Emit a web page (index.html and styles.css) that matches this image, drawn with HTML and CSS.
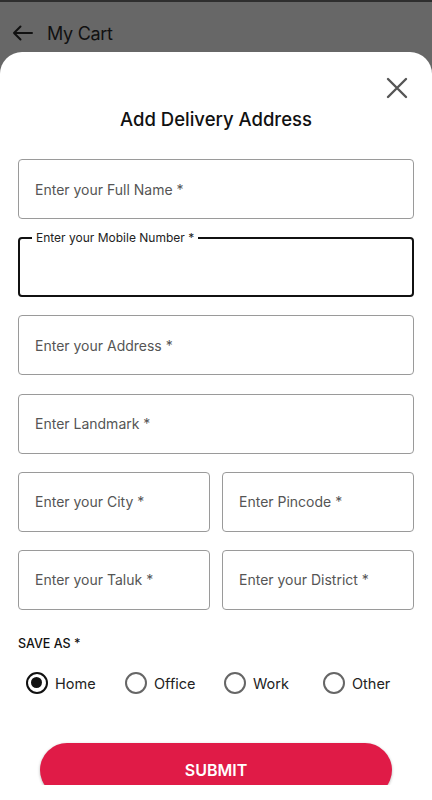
FILE: index.html
```html
<!DOCTYPE html>
<html lang="en">
<head>
    <meta charset="UTF-8">
    <meta name="viewport" content="width=device-width, initial-scale=1.0">
    <title>My Cart - Add Delivery Address</title>
    <link rel="stylesheet" href="styles.css">
</head>
<body>
    <!-- Page behind the sheet -->
    <header class="topbar">
        <svg class="back-icon" width="22" height="16" viewBox="0 0 22 16">
            <path d="M20 8H2M8.5 1.5L2 8l6.5 6.5" fill="none" stroke="#111" stroke-width="2" stroke-linecap="round" stroke-linejoin="round"/>
        </svg>
        <span class="topbar-title">My Cart</span>
    </header>

    <!-- Bottom sheet -->
    <div class="sheet">
        <div class="sheet-scroll">
            <div class="sheet-head">
                <svg class="close-icon" width="22" height="22" viewBox="0 0 22 22">
                    <path d="M2 2L20 20M20 2L2 20" fill="none" stroke="#555" stroke-width="2.4" stroke-linecap="round"/>
                </svg>
            </div>
            <h1 class="sheet-title">Add Delivery Address</h1>

            <form class="address-form">
                <div class="field">
                    <span class="placeholder">Enter your Full Name *</span>
                </div>
                <div class="field focused">
                    <span class="float-label">Enter your Mobile Number *</span>
                </div>
                <div class="field">
                    <span class="placeholder">Enter your Address *</span>
                </div>
                <div class="field">
                    <span class="placeholder">Enter Landmark *</span>
                </div>
                <div class="field-row">
                    <div class="field">
                        <span class="placeholder">Enter your City *</span>
                    </div>
                    <div class="field">
                        <span class="placeholder">Enter Pincode *</span>
                    </div>
                </div>
                <div class="field-row">
                    <div class="field">
                        <span class="placeholder">Enter your Taluk *</span>
                    </div>
                    <div class="field">
                        <span class="placeholder">Enter your District *</span>
                    </div>
                </div>

                <div class="save-as">SAVE AS *</div>
                <div class="radio-group">
                    <label class="radio-item"><span class="radio checked"></span>Home</label>
                    <label class="radio-item"><span class="radio"></span>Office</label>
                    <label class="radio-item"><span class="radio"></span>Work</label>
                    <label class="radio-item"><span class="radio"></span>Other</label>
                </div>

                <button type="button" class="submit-btn">SUBMIT</button>
            </form>
        </div>
    </div>
</body>
</html>
```

FILE: styles.css
```css
/* General page */
body {
    margin: 0;
    padding: 0;
    width: 432px;
    height: 800px;
    overflow: hidden;
    font-family: Inter, "Noto Sans", sans-serif;
    background-color: #676767;
    border-top: 2px solid #2e2e2e;
    box-sizing: border-box;
    display: flex;
    flex-direction: column;
}

/* Top bar behind the sheet */
.topbar {
    height: 50px;
    display: flex;
    align-items: center;
    padding: 12px 0 0 12px;
    box-sizing: border-box;
}

.back-icon {
    margin-top: -1px;
}

.topbar-title {
    margin-left: 13px;
    font-size: 18px;
    letter-spacing: -0.3px;
    color: #111;
}

/* Bottom sheet */
.sheet {
    flex: 1;
    background-color: #fff;
    border-radius: 22px 22px 0 0;
    padding-bottom: 15px;
    display: flex;
    flex-direction: column;
    min-height: 0;
}

.sheet-scroll {
    flex: 1;
    overflow: hidden;
    padding: 0 18px;
}

.sheet-head {
    display: flex;
    justify-content: flex-end;
    padding: 25px 6px 0 0;
}

.close-icon {
    display: block;
}

.sheet-title {
    margin: 8px 0 0;
    text-align: center;
    font-size: 18.5px;
    line-height: 24px;
    font-weight: 500;
    color: #111;
}

/* Form fields */
.address-form {
    margin-top: 28px;
    display: flex;
    flex-direction: column;
}

.field {
    position: relative;
    height: 60px;
    box-sizing: border-box;
    border: 1px solid #9a9a9a;
    border-radius: 4px;
    display: flex;
    align-items: center;
    padding: 0 16px;
    margin-bottom: 18.2px;
}

.field.focused {
    border: 2px solid #111;
}

.placeholder {
    font-size: 14px;
    color: #555;
}

.float-label {
    position: absolute;
    top: -8px;
    left: 12px;
    padding: 0 4px;
    background-color: #fff;
    font-size: 12px;
    line-height: 14px;
    color: #222;
}

.field-row {
    display: grid;
    grid-template-columns: 1fr 1fr;
    column-gap: 12px;
}

/* Save as radios */
.save-as {
    margin-top: 8px;
    font-size: 12.5px;
    line-height: 16px;
    font-weight: 500;
    color: #111;
}

.radio-group {
    margin-top: 20px;
    display: grid;
    grid-template-columns: repeat(4, 1fr);
}

.radio-item {
    display: flex;
    align-items: center;
    padding-left: 8px;
    font-size: 14.5px;
    color: #222;
}

.radio {
    width: 22px;
    height: 22px;
    box-sizing: border-box;
    border: 2px solid #666;
    border-radius: 50%;
    margin-right: 7px;
    position: relative;
}

.radio.checked {
    border: 2.5px solid #111;
}

.radio.checked::after {
    content: "";
    position: absolute;
    top: 3px;
    left: 3px;
    width: 11px;
    height: 11px;
    border-radius: 50%;
    background-color: #111;
}

/* Submit button */
.submit-btn {
    margin: 49px 4px 0;
    align-self: center;
    width: 352px;
    height: 54px;
    border: none;
    border-radius: 27px;
    background-color: #e01b47;
    color: #fff;
    font-family: Inter, "Noto Sans", sans-serif;
    font-size: 16px;
    font-weight: 600;
    box-shadow: 0 1px 3px rgba(0, 0, 0, 0.3);
    cursor: pointer;
}
```
